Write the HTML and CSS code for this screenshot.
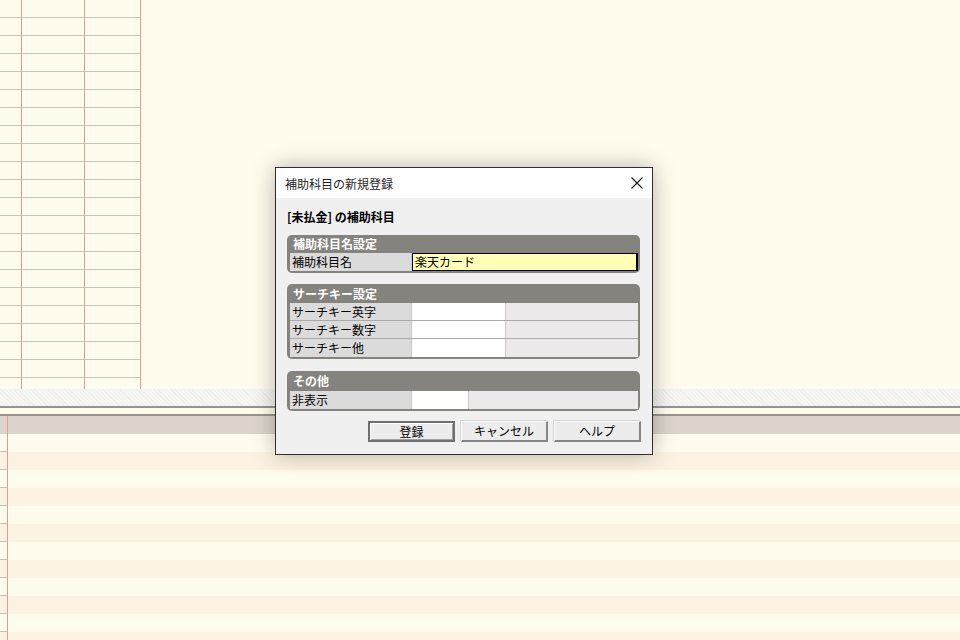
FILE: index.html
```html
<!DOCTYPE html>
<html lang="ja">
<head>
<meta charset="utf-8">
<link rel="stylesheet" href="styles.css">
</head>
<body>
<div class="screen">
  <div class="top-grid">
    <div class="col c1"></div>
    <div class="col c2"></div>
    <div class="col c3"></div>
  </div>
  <div class="hatch"></div>
  <div class="split"></div>
  <div class="lower">
    <div class="lower-head"></div>
    <div class="lower-rows"></div>
  </div>

  <div class="dialog">
    <div class="titlebar">
      <span class="title">補助科目の新規登録</span>
      <svg class="close" width="12" height="12" viewBox="0 0 12 12"><path d="M0.5 0.5 L11.5 11.5 M11.5 0.5 L0.5 11.5" stroke="#1a1a1a" stroke-width="1.1" fill="none"/></svg>
    </div>
    <div class="body">
      <div class="heading">[未払金] の補助科目</div>

      <div class="group g1">
        <div class="ghead">補助科目名設定</div>
        <div class="grow">
          <div class="glabel">補助科目名</div>
          <div class="ginput">楽天カード</div>
        </div>
      </div>

      <div class="group g2">
        <div class="ghead">サーチキー設定</div>
        <div class="grow sep">
          <div class="glabel">サーチキー英字</div>
          <div class="gwhite"></div>
          <div class="grest"></div>
        </div>
        <div class="grow sep">
          <div class="glabel">サーチキー数字</div>
          <div class="gwhite"></div>
          <div class="grest"></div>
        </div>
        <div class="grow">
          <div class="glabel">サーチキー他</div>
          <div class="gwhite"></div>
          <div class="grest"></div>
        </div>
      </div>

      <div class="group g3">
        <div class="ghead">その他</div>
        <div class="grow">
          <div class="glabel">非表示</div>
          <div class="gwhite short"></div>
          <div class="grest"></div>
        </div>
      </div>

      <div class="buttons">
        <div class="btn default">登録</div>
        <div class="btn">キャンセル</div>
        <div class="btn">ヘルプ</div>
      </div>
    </div>
  </div>
</div>
</body>
</html>
```
FILE: styles.css
```css
html, body {
  margin: 0;
  padding: 0;
}
body {
  background: #fffbed;
  font-family: "Noto Sans CJK JP", "Noto Sans", sans-serif;
  font-size: 12px;
  color: #000;
}
.screen {
  position: relative;
  width: 960px;
  height: 640px;
  overflow: hidden;
  background: #fffbed;
}
.top-grid {
  display: flex;
  height: 389px;
  width: 141px;
  background-image: repeating-linear-gradient(to bottom, transparent 0, transparent 17px, #cbc4b8 17px, #cbc4b8 18px);
}
.col {
  border-right: 1px solid #d9a095;
  height: 100%;
}
.c1 { width: 21px; }
.c2 { width: 62px; }
.c3 { width: 55px; }
.hatch {
  height: 17px;
  background-color: #f6f6f4;
  background-image: repeating-linear-gradient(45deg, #efefed 0, #efefed 1px, transparent 1px, transparent 3px);
}
.split {
  height: 6px;
  border-top: 2px solid #97948e;
  border-bottom: 2px solid #97948e;
  background: #fffbed;
}
.lower-head {
  height: 18px;
  background: #ddd5cb;
  background-image: linear-gradient(to right, transparent 7px, #d9a095 7px, #d9a095 8px, transparent 8px);
}
.lower-rows {
  height: 220px;
  background-image:
    linear-gradient(to right, transparent 7px, #d9a095 7px, #d9a095 8px, transparent 8px),
    repeating-linear-gradient(to bottom, transparent 0, transparent 17px, #c9c2b6 17px, #c9c2b6 18px),
    repeating-linear-gradient(to bottom, #fffbed 0, #fffbed 18px, #fcf2e1 18px, #fcf2e1 36px);
  background-size: 100% 100%, 7px 100%, 100% 100%;
  background-repeat: no-repeat, no-repeat, no-repeat;
}

.dialog {
  position: absolute;
  left: 275px;
  top: 167px;
  width: 376px;
  height: 286px;
  border: 1px solid #2e2e2e;
  background: #f0f0f0;
  box-shadow: 0 0 22px rgba(0, 0, 0, 0.28);
  display: flex;
  flex-direction: column;
}
.titlebar {
  height: 30px;
  background: #ffffff;
  display: flex;
  align-items: center;
  justify-content: space-between;
  padding: 0 9px 0 9px;
}
.title {
  color: #1f1f1f;
  font-size: 12px;
  padding-top: 1px;
}
.body {
  padding: 10px 11px 0 11px;
  display: flex;
  flex-direction: column;
}
.heading {
  font-weight: bold;
  font-size: 12px;
  height: 18px;
  line-height: 18px;
  margin-bottom: 9px;
}
.group {
  background: #85837e;
  border-radius: 5px;
  padding: 0 2px 2px 3px;
  width: 348px;
}
.g2 { margin-top: 11px; }
.g3 { margin-top: 12px; }
.ghead {
  height: 18px;
  line-height: 18px;
  color: #ffffff;
  font-weight: bold;
  padding-left: 3px;
  font-size: 12px;
}
.g2 .ghead { height: 19px; line-height: 19px; }
.g3 .ghead { height: 20px; line-height: 20px; }
.grow {
  display: flex;
  height: 18px;
  background: #ebe9e9;
}
.grow.sep {
  height: 17px;
  border-bottom: 1px solid #a9a9a9;
}
.glabel {
  width: 119px;
  padding-left: 2px;
  background: #dcdbdb;
  line-height: 18px;
  font-size: 12px;
  border-right: 1px solid #c8c8c8;
}
.sep .glabel { line-height: 17px; }
.ginput {
  flex: 1;
  background: #ffffb8;
  border: 1px solid #000;
  border-right-width: 2px;
  line-height: 16px;
  padding-left: 2px;
  font-size: 12px;
}
.gwhite {
  width: 93px;
  background: #ffffff;
  border-right: 1px solid #c8c8c8;
}
.gwhite.short {
  width: 56px;
}
.grest {
  flex: 1;
  background: #ebe9e9;
}
.buttons {
  display: flex;
  justify-content: flex-end;
  gap: 6px;
  margin-top: 10px;
}
.btn {
  width: 84px;
  height: 18px;
  line-height: 18px;
  text-align: center;
  font-size: 12px;
  background: #ececec;
  border-top: 1px solid #ffffff;
  border-left: 1px solid #ffffff;
  border-right: 2px solid #858585;
  border-bottom: 2px solid #858585;
  box-shadow: -1px -1px 0 #d4d4d4;
}
.btn.default {
  border: 2px solid #6e6e6e;
  box-shadow: inset 1px 1px 0 #ffffff, inset -1px -1px 0 #a0a0a0;
  width: 83px;
  height: 17px;
  line-height: 17px;
}
```
